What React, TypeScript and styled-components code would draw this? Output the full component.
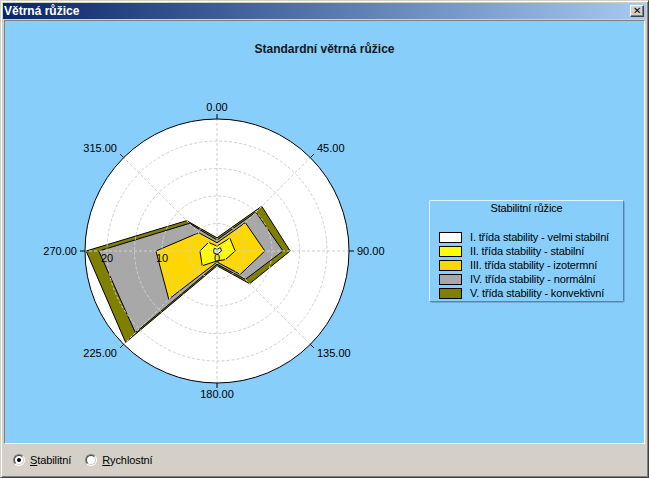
import React from 'react';
import styled, { createGlobalStyle } from 'styled-components';

const GlobalStyle = createGlobalStyle`
  body {
    margin: 0;
    font-family: "Liberation Sans", Arial, sans-serif;
    font-size: 11px;
  }
`;

const Window = styled.div`
  width: 649px;
  height: 478px;
  box-sizing: border-box;
  background: #d4d0c8;
  border: 1px solid;
  border-color: #d4d0c8 #404040 #404040 #d4d0c8;
  box-shadow: inset 1px 1px #fff, inset -1px -1px #808080;
  padding: 2px;
  display: flex;
  flex-direction: column;
`;

const TitleBar = styled.div`
  flex: none;
  height: 16px;
  display: flex;
  align-items: center;
  justify-content: space-between;
  padding: 0 2px 0 1px;
  background: linear-gradient(to right, #0a246a, #a6caf0);
`;

const TitleText = styled.span`
  color: #fff;
  font-weight: bold;
  font-size: 12px;
  line-height: 16px;
`;

const CloseButton = styled.span`
  width: 14px;
  height: 12px;
  box-sizing: border-box;
  background: #d4d0c8;
  border: 1px solid;
  border-color: #fff #404040 #404040 #fff;
  box-shadow: inset -1px -1px #808080;
  display: flex;
  align-items: center;
  justify-content: center;
  font-size: 10px;
  line-height: 1;
  color: #000;
`;

const ChartPanel = styled.div`
  flex: none;
  height: 424px;
  box-sizing: border-box;
  margin: 1px 1px 0;
  border: 1px solid;
  border-color: #808080 #fff #fff #808080;
  background: #87cefa;
  display: flex;
  flex-direction: column;
`;

const ChartTitle = styled.div`
  padding-top: 21px;
  text-align: center;
  font-weight: bold;
  font-size: 12px;
  line-height: 14px;
  color: #161620;
`;

const PlotRow = styled.div`
  display: flex;
  align-items: center;
  margin-top: 30px;
  padding-left: 32px;
`;

const Legend = styled.div`
  width: 195px;
  height: 102px;
  box-sizing: border-box;
  margin-left: 32px;
  border: 1px solid;
  border-color: #e4f3ff #4f86b0 #4f86b0 #e4f3ff;
  box-shadow: 1px 1px 0 #74acd6;
  border-radius: 2px;
  padding: 1px 0 0 9px;
  letter-spacing: -0.15px;
`;

const LegendTitle = styled.div`
  text-align: center;
  line-height: 13px;
  padding-right: 9px;
  color: #000;
`;

const LegendList = styled.div`
  margin-top: 15px;
  display: flex;
  flex-direction: column;
`;

const LegendRow = styled.div`
  display: flex;
  align-items: center;
  height: 14px;
  gap: 8px;
  color: #000;
`;

const Swatch = styled.span<{ $color: string }>`
  width: 23px;
  height: 11px;
  box-sizing: border-box;
  border: 1px solid #000;
  background: ${(p) => p.$color};
`;

const BottomBar = styled.div`
  flex: 1;
  display: flex;
  align-items: center;
  padding-left: 10px;
  gap: 14px;
  letter-spacing: -0.1px;
`;

const RadioLabel = styled.label`
  display: flex;
  align-items: center;
  gap: 5px;
  color: #000;
`;

const RadioOuter = styled.span`
  width: 12px;
  height: 12px;
  box-sizing: border-box;
  border-radius: 50%;
  border: 1px solid;
  border-color: #808080 #fff #fff #808080;
  display: flex;
`;

const RadioInner = styled.span`
  flex: 1;
  border-radius: 50%;
  border: 1px solid;
  border-color: #404040 #d4d0c8 #d4d0c8 #404040;
  background: #fff;
  display: flex;
  align-items: center;
  justify-content: center;
`;

const RadioDot = styled.span`
  width: 4px;
  height: 4px;
  border-radius: 50%;
  background: #000;
`;

const Key = styled.span`
  text-decoration: underline;
`;

const SCALE = 5.5;
const CX = 180;
const CY = 165;
const R = 132;
const ANGLES = [0, 45, 90, 135, 180, 225, 270, 315];

const classes = [
  { name: 'V. třída stability - konvektivní', color: '#808000', v: [2.4, 11.5, 13.3, 8.4, 2.7, 23.5, 23.8, 7.8] },
  { name: 'IV. třída stability - normální', color: '#a8a8a8', v: [2.0, 10.0, 12.0, 7.3, 2.4, 21.0, 21.5, 7.1] },
  { name: 'III. třída stability - izotermní', color: '#ffd700', v: [1.5, 7.3, 8.7, 6.0, 2.0, 12.4, 11.1, 4.7] },
  { name: 'II. třída stability - stabilní', color: '#ffff00', v: [0.9, 3.3, 3.3, 2.2, 1.8, 3.8, 3.1, 2.2] },
  { name: 'I. třída stability - velmi stabilní', color: '#ffffff', v: [0.3, 0.9, 0.8, 0.5, 0.5, 0.7, 0.6, 0.7] },
];

const pt = (deg: number, r: number) => {
  const a = (deg * Math.PI) / 180;
  return [CX + r * Math.sin(a), CY - r * Math.cos(a)];
};

const axisLabels: { t: string; x: number; y: number; a: 'start' | 'middle' | 'end' }[] = [
  { t: '0.00', x: CX, y: CY - 140, a: 'middle' },
  { t: '45.00', x: CX + 100, y: CY - 99, a: 'start' },
  { t: '90.00', x: CX + 140, y: CY + 4, a: 'start' },
  { t: '135.00', x: CX + 100, y: CY + 106, a: 'start' },
  { t: '180.00', x: CX, y: CY + 147, a: 'middle' },
  { t: '225.00', x: CX - 100, y: CY + 106, a: 'end' },
  { t: '270.00', x: CX - 140, y: CY + 4, a: 'end' },
  { t: '315.00', x: CX - 100, y: CY - 99, a: 'end' },
];

const PolarChart: React.FC = () => (
  <svg width={360} height={330} style={{ flex: 'none' }} fontFamily='"Liberation Sans", Arial, sans-serif' fontSize={11}>
    <circle cx={CX} cy={CY} r={R} fill="#fff" />
    {classes.map((c) => (
      <polygon
        key={c.name}
        points={c.v.map((v, i) => pt(ANGLES[i], v * SCALE).join(',')).join(' ')}
        fill={c.color}
        stroke="#000"
        strokeWidth={1}
        strokeLinejoin="miter"
      />
    ))}
    <g stroke="#cfcfcf" strokeWidth={1} strokeDasharray="3 2" fill="none">
      {[5, 10, 15, 20].map((u) => (
        <circle key={u} cx={CX} cy={CY} r={u * SCALE} />
      ))}
      {ANGLES.map((d) => {
        const [x, y] = pt(d, R);
        return <line key={d} x1={CX} y1={CY} x2={x} y2={y} />;
      })}
    </g>
    <circle cx={CX} cy={CY} r={R} fill="none" stroke="#000" strokeWidth={1} />
    {ANGLES.map((d) => {
      const [x1, y1] = pt(d, R);
      const [x2, y2] = pt(d, R + 5);
      return <line key={d} x1={x1} y1={y1} x2={x2} y2={y2} stroke="#000" />;
    })}
    {[0, 10, 20].map((u) => (
      <text key={u} x={CX - u * SCALE} y={CY + 11} textAnchor="middle" fill="#000">
        {u}
      </text>
    ))}
    {axisLabels.map((l) => (
      <text key={l.t} x={l.x} y={l.y} textAnchor={l.a} fill="#000">
        {l.t}
      </text>
    ))}
  </svg>
);

const App: React.FC = () => {
  const legendItems = [...classes].reverse();
  return (
    <>
      <GlobalStyle />
      <Window>
        <TitleBar>
          <TitleText>Větrná růžice</TitleText>
          <CloseButton>✕</CloseButton>
        </TitleBar>
        <ChartPanel>
          <ChartTitle>Standardní větrná růžice</ChartTitle>
          <PlotRow>
            <PolarChart />
            <Legend>
              <LegendTitle>Stabilitní růžice</LegendTitle>
              <LegendList>
                {legendItems.map((c) => (
                  <LegendRow key={c.name}>
                    <Swatch $color={c.color} />
                    {c.name}
                  </LegendRow>
                ))}
              </LegendList>
            </Legend>
          </PlotRow>
        </ChartPanel>
        <BottomBar>
          <RadioLabel>
            <RadioOuter>
              <RadioInner>
                <RadioDot />
              </RadioInner>
            </RadioOuter>
            <span>
              <Key>S</Key>tabilitní
            </span>
          </RadioLabel>
          <RadioLabel>
            <RadioOuter>
              <RadioInner />
            </RadioOuter>
            <span>
              <Key>R</Key>ychlostní
            </span>
          </RadioLabel>
        </BottomBar>
      </Window>
    </>
  );
};

export default App;
